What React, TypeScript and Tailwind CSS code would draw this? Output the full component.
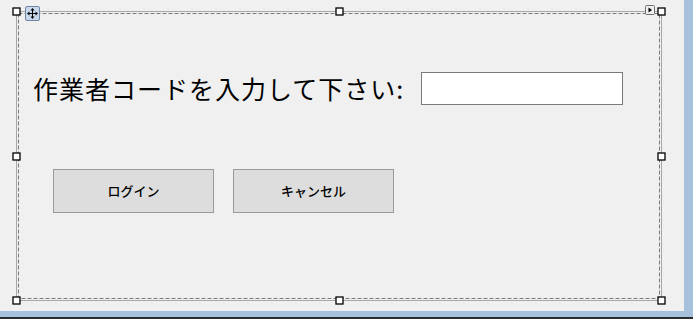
import React from 'react';

// Handles of the designer selection frame
const handles = [
    [16.5, 11.5],
    [339.5, 11.5],
    [661.5, 11.5],
    [16.5, 156.5],
    [661.5, 156.5],
    [16.5, 300.5],
    [339.5, 300.5],
    [661.5, 300.5],
];

function SelectionFrame() {
    return (
        <svg
            className="pointer-events-none absolute left-0 top-0"
            width={684}
            height={311}
            viewBox="0 0 684 311"
        >
            {/* outer dotted border */}
            <rect
                x={16.5}
                y={11.5}
                width={645}
                height={289}
                fill="none"
                stroke="#5f5f5f"
                strokeDasharray="1 1"
            />
            {/* inner dashed border */}
            <rect
                x={18.5}
                y={13.5}
                width={641}
                height={285}
                fill="none"
                stroke="#7a7a7a"
                strokeDasharray="4 2"
            />
            {handles.map(([x, y], i) => (
                <rect
                    key={i}
                    x={x - 3.5}
                    y={y - 3.5}
                    width={7}
                    height={7}
                    fill="#fff"
                    stroke="#000"
                    strokeWidth={1.3}
                />
            ))}
            {/* move glyph */}
            <rect x={25.5} y={6.5} width={14} height={14} rx={1.5} fill="#c9d7ea" stroke="#6f86a8" />
            <g fill="#000">
                <rect x={28} y={13} width={9} height={1} />
                <rect x={32} y={9} width={1} height={9} />
                <path d="M32.5 8 L30.5 10.5 L34.5 10.5 Z" />
                <path d="M32.5 19 L30.5 16.5 L34.5 16.5 Z" />
                <path d="M27 13.5 L29.5 11.5 L29.5 15.5 Z" />
                <path d="M38 13.5 L35.5 11.5 L35.5 15.5 Z" />
            </g>
            {/* smart tag arrow */}
            <rect x={645.5} y={5.5} width={9} height={9} rx={1} fill="#f0f0f0" stroke="#6e6e6e" />
            <path d="M648.5 7.5 L652 10 L648.5 12.5 Z" fill="#000" />
        </svg>
    );
}

export default function App() {
    return (
        <div
            className="flex h-[319px] w-[693px] flex-col overflow-hidden"
            style={{ fontFamily: '"Noto Sans CJK JP", "Noto Sans", sans-serif' }}
        >
            <div className="flex flex-1">
                <div className="relative flex-1 bg-[#f0f0f0] pl-[33px] pt-[72px]">
                    <div className="flex h-[33px] items-center">
                        <div className="w-[388px] text-[25px] leading-none tracking-[1px] text-black">
                            作業者コードを入力して下さい:
                        </div>
                        <div className="h-[33px] w-[202px] border border-[#7a7a7a] bg-white" />
                    </div>

                    <div className="mt-[64px] flex gap-[19px] pl-[20px]">
                        <button className="h-[44px] w-[161px] border border-[#9a9a9a] bg-[#dddddd] text-[13px] font-medium text-black">
                            ログイン
                        </button>
                        <button className="h-[44px] w-[161px] border border-[#9a9a9a] bg-[#dddddd] text-[13px] font-medium text-black">
                            キャンセル
                        </button>
                    </div>

                    <SelectionFrame />
                </div>
                <div className="w-[9px] bg-[#a7c0dc]" />
            </div>
            <div className="h-[6px] bg-[#a7c0dc]" />
            <div className="h-[2px] bg-[#2b2b2b]" />
        </div>
    );
}
